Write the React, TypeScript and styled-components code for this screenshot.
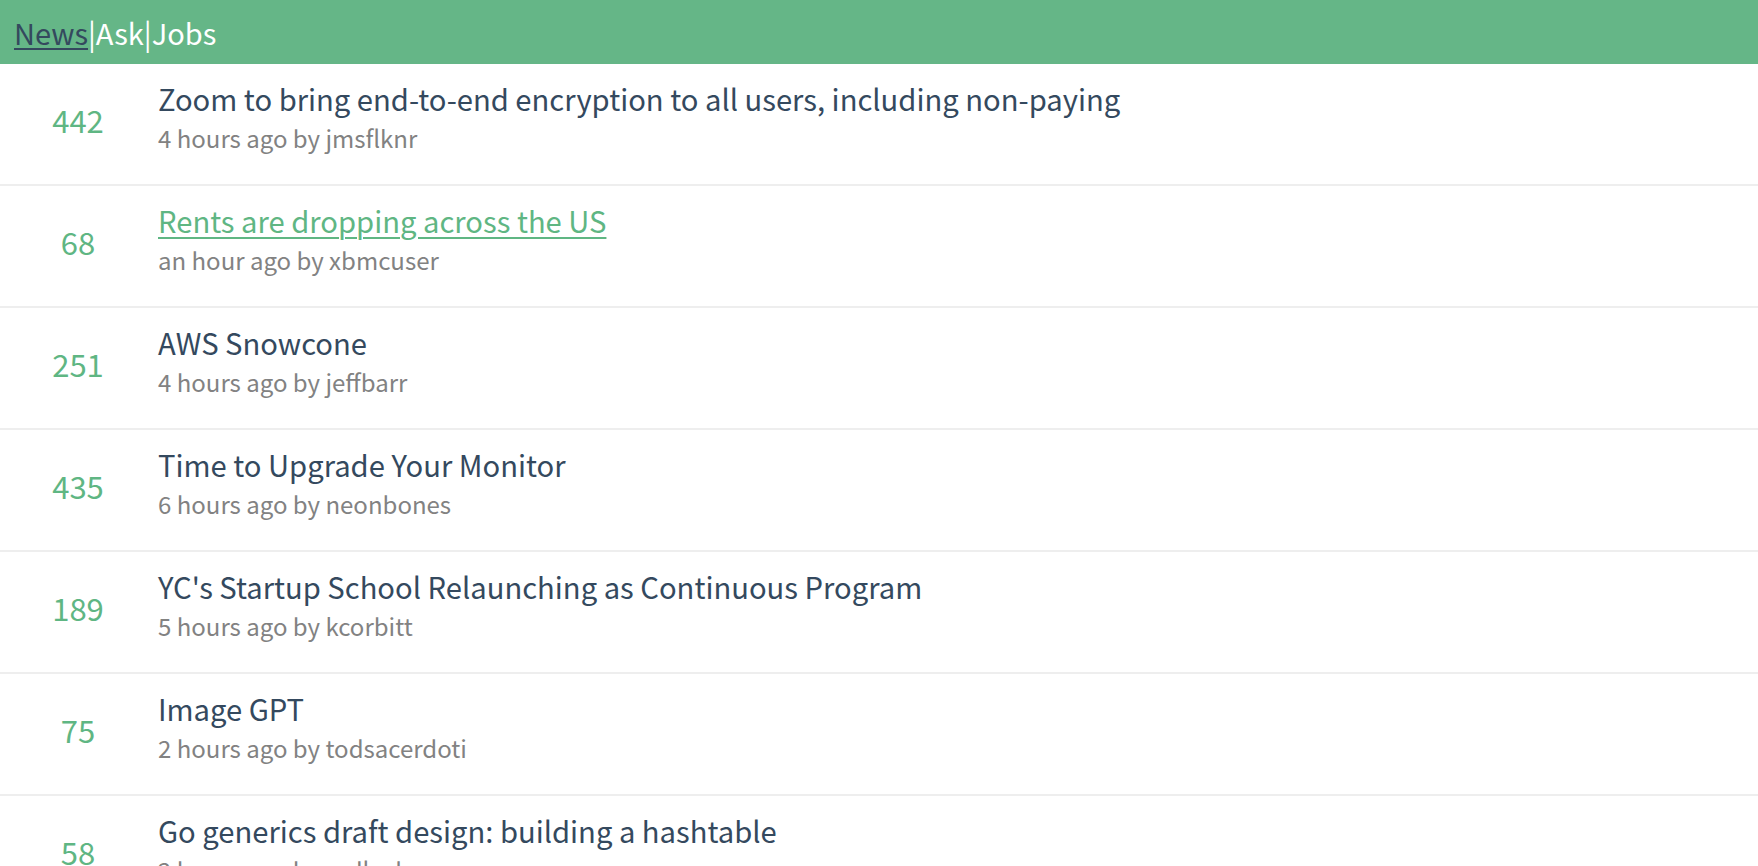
import React from "react";
import styled, { createGlobalStyle } from "styled-components";

const Global = createGlobalStyle`
  html, body { margin: 0; padding: 0; background: #fff; }
  body { font-family: "Noto Sans CJK KR", "Noto Sans", sans-serif; overflow: hidden; }
`;

const Header = styled.header`
  height: 64px;
  background: #65b687;
  display: flex;
  align-items: center;
  padding: 0 14px;
  box-sizing: border-box;
  font-size: 29px;
  color: #fff;
`;

const NavLink = styled.a<{ $active?: boolean }>`
  color: ${(p) => (p.$active ? "#34495e" : "#fff")};
  text-decoration: ${(p) => (p.$active ? "underline" : "none")};
  text-underline-offset: 3px;
  text-decoration-thickness: 2px;
`;

const Sep = styled.span`
  color: #fff;
`;

const List = styled.ul`
  list-style: none;
  margin: 0;
  padding: 0;
`;

const Item = styled.li`
  display: flex;
  align-items: flex-start;
  height: 122px;
  padding-top: 14px;
  box-sizing: border-box;
  border-bottom: 2px solid #eeeeee;
`;

const Score = styled.span`
  width: 156px;
  flex: none;
  text-align: center;
  color: #5fb683;
  font-size: 31px;
  line-height: 31px;
  margin-top: 26px;
`;

const Body = styled.div`
  display: flex;
  flex-direction: column;
  padding-left: 2px;
`;

const Title = styled.a<{ $hover?: boolean }>`
  font-size: 29.2px;
  line-height: 41px;
  color: ${(p) => (p.$hover ? "#5fb683" : "#34495e")};
  text-decoration: ${(p) => (p.$hover ? "underline" : "none")};
  text-underline-offset: 4px;
  text-decoration-thickness: 2px;
  align-self: flex-start;
`;

const Meta = styled.span`
  font-size: 24px;
  line-height: 38px;
  color: #828282;
`;

const items = [
  { score: 442, title: "Zoom to bring end-to-end encryption to all users, including non-paying", meta: "4 hours ago by jmsflknr" },
  { score: 68, title: "Rents are dropping across the US", meta: "an hour ago by xbmcuser", hover: true },
  { score: 251, title: "AWS Snowcone", meta: "4 hours ago by jeffbarr" },
  { score: 435, title: "Time to Upgrade Your Monitor", meta: "6 hours ago by neonbones" },
  { score: 189, title: "YC's Startup School Relaunching as Continuous Program", meta: "5 hours ago by kcorbitt" },
  { score: 75, title: "Image GPT", meta: "2 hours ago by todsacerdoti" },
  { score: 58, title: "Go generics draft design: building a hashtable", meta: "2 hours ago by mdlayher" },
];

export default function App() {
  return (
    <>
      <Global />
      <Header>
        <NavLink $active href="#">News</NavLink>
        <Sep>|</Sep>
        <NavLink href="#">Ask</NavLink>
        <Sep>|</Sep>
        <NavLink href="#">Jobs</NavLink>
      </Header>
      <List>
        {items.map((it) => (
          <Item key={it.title}>
            <Score>{it.score}</Score>
            <Body>
              <Title href="#" $hover={it.hover}>{it.title}</Title>
              <Meta>{it.meta}</Meta>
            </Body>
          </Item>
        ))}
      </List>
    </>
  );
}
